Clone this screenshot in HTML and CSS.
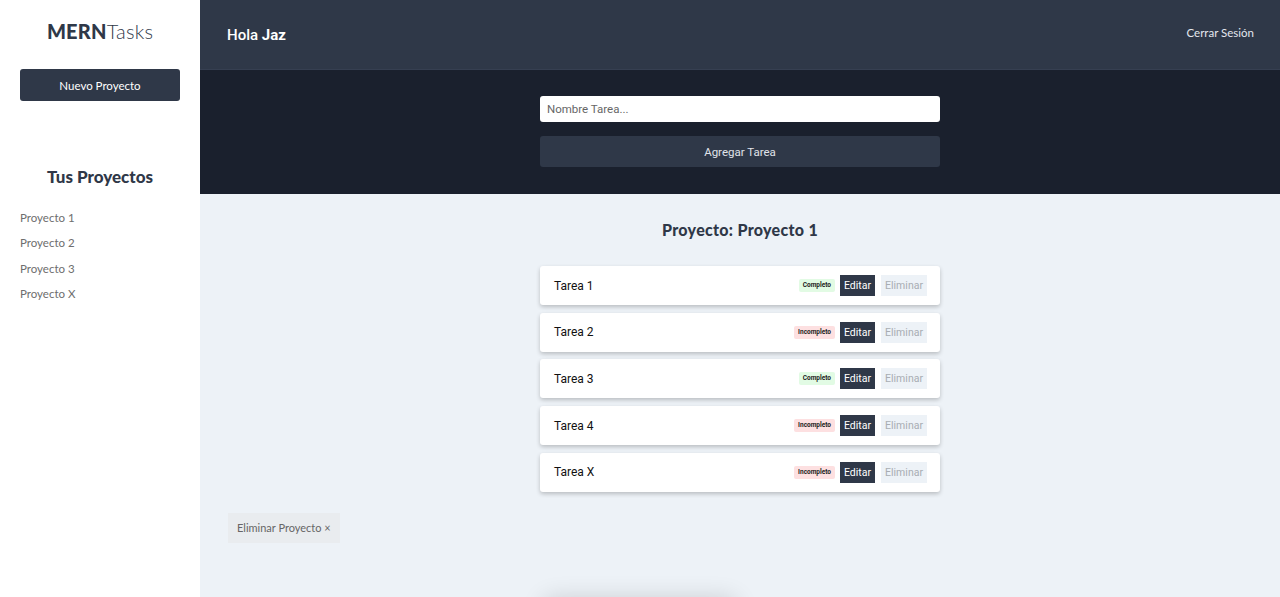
FILE: index.html
```html
<!DOCTYPE html>
<html lang="es">
<head>
<meta charset="utf-8">
<title>MERNTasks</title>
<link rel="stylesheet" href="styles.css">
</head>
<body>
<div class="app">
  <aside class="sidebar">
    <h1 class="logo"><b>MERN</b><span>Tasks</span></h1>
    <button class="btn-new">Nuevo Proyecto</button>
    <h2 class="projects-title">Tus Proyectos</h2>
    <ul class="project-list">
      <li>Proyecto 1</li>
      <li>Proyecto 2</li>
      <li>Proyecto 3</li>
      <li>Proyecto X</li>
    </ul>
  </aside>
  <section class="main">
    <header class="topbar">
      <p class="greet">Hola <b>Jaz</b></p>
      <a class="logout">Cerrar Sesión</a>
    </header>
    <div class="form-area">
      <form class="task-form">
        <input class="task-input" type="text" placeholder="Nombre Tarea...">
        <button type="button" class="btn-add">Agregar Tarea</button>
      </form>
    </div>
    <div class="content">
      <h2 class="project-title">Proyecto: Proyecto 1</h2>
      <ul class="task-list">
        <li class="task"><span class="task-name">Tarea 1</span><span class="badge ok">Completo</span><button class="btn-edit">Editar</button><button class="btn-del">Eliminar</button></li>
        <li class="task"><span class="task-name">Tarea 2</span><span class="badge no">Incompleto</span><button class="btn-edit">Editar</button><button class="btn-del">Eliminar</button></li>
        <li class="task"><span class="task-name">Tarea 3</span><span class="badge ok">Completo</span><button class="btn-edit">Editar</button><button class="btn-del">Eliminar</button></li>
        <li class="task"><span class="task-name">Tarea 4</span><span class="badge no">Incompleto</span><button class="btn-edit">Editar</button><button class="btn-del">Eliminar</button></li>
        <li class="task"><span class="task-name">Tarea X</span><span class="badge no">Incompleto</span><button class="btn-edit">Editar</button><button class="btn-del">Eliminar</button></li>
      </ul>
      <button class="btn-del-project">Eliminar Proyecto &times;</button>
      <div class="ghost"></div>
    </div>
  </section>
</div>
</body>
</html>
```
FILE: styles.css
```css
* { box-sizing: border-box; }
html, body { margin: 0; padding: 0; height: 100%; }
body { font-family: Lato, "Open Sans", sans-serif; background: #edf2f7; overflow: hidden; }
.app { display: flex; height: 597px; overflow: hidden; }

.sidebar { width: 200px; flex: none; background: #fff; padding: 0 20px; display: flex; flex-direction: column; }
.logo { margin: 19px 0 0; text-align: center; font-size: 20px; line-height: 24px; color: #2f3848; font-weight: 300; letter-spacing: 0.2px; }
.logo b { font-weight: 900; }
.logo span { font-weight: 300; }
.btn-new { margin-top: 26px; height: 32px; background: #2f3848; color: #fff; border: 0; border-radius: 3px; font-family: Lato, sans-serif; font-size: 11.5px; width: 160px; }
.projects-title { margin: 66px 0 0; text-align: center; font-size: 17px; line-height: 20px; font-weight: 900; color: #2f3848; }
.project-list { list-style: none; margin: 23px 0 0; padding: 0; }
.project-list li { font-size: 11.5px; color: #6e6e6e; height: 25.3px; line-height: 16px; }

.main { flex: 1; display: flex; flex-direction: column; min-height: 0; overflow: hidden; }
.topbar { height: 70px; flex: none; background: #2f3848; display: flex; align-items: center; justify-content: space-between; padding: 0 26px 0 27px; border-bottom: 1px solid #363f51; }
.greet { margin: 0; color: #fff; font-family: Roboto, "Liberation Sans", sans-serif; font-size: 15px; font-weight: 500; }
.greet b { font-weight: 700; }
.logout { color: #e4e7ee; font-size: 11.5px; margin-top: -5px; }

.form-area { height: 124px; flex: none; background: #1a202d; display: flex; justify-content: center; padding-top: 26px; }
.task-form { width: 400px; display: flex; flex-direction: column; gap: 14px; }
.task-input { height: 26px; border: 0; border-radius: 3px; padding: 0 7px; font-family: Roboto, sans-serif; font-size: 11.5px; background: #fff; }
.task-input::placeholder { color: #666; }
.btn-add { height: 31px; border: 0; border-radius: 3px; background: #2f3848; color: #e0e3ea; font-family: Roboto, sans-serif; font-size: 11.5px; }

.content { flex: 1; min-height: 0; position: relative; display: flex; flex-direction: column; align-items: center; padding-top: 26px; }
.project-title { margin: 0; font-size: 16px; line-height: 20px; font-weight: 900; color: #2f3848; letter-spacing: 0.3px; }
.task-list { list-style: none; margin: 26px 0 0; padding: 0; width: 400px; display: flex; flex-direction: column; gap: 7.7px; }
.task { height: 39px; flex: none; background: #fff; border-radius: 3px; box-shadow: 0 2px 4px rgba(0,0,0,0.22); display: flex; align-items: center; padding: 0 13px 0 14px; font-family: Roboto, sans-serif; }
.task-name { flex: 1; font-size: 12px; color: #111; }
.badge { font-size: 6.5px; font-weight: 700; color: #222; padding: 0 4px; height: 13px; line-height: 13px; border-radius: 2px; margin-right: 5px; }
.badge.ok { background: #e2fbe4; }
.badge.no { background: #fde0e1; }
.btn-edit { height: 21px; width: 35px; padding: 0; border: 0; background: #2f3848; color: #fff; font-family: Roboto, sans-serif; font-size: 10.5px; margin-right: 6px; }
.btn-del { height: 21px; width: 46px; padding: 0; border: 0; background: #edf2f7; color: #a8adb3; font-family: Roboto, sans-serif; font-size: 10.5px; }

.btn-del-project { align-self: flex-start; flex: none; margin: 21px 0 0 28px; height: 30px; padding: 0 9px; border: 0; background: #e9ecef; color: #666; font-family: Lato, sans-serif; font-size: 11px; }
.ghost { position: absolute; left: 345px; top: 405px; width: 190px; height: 40px; border-radius: 4px; box-shadow: 0 0 24px rgba(0,0,0,0.16); }
```
